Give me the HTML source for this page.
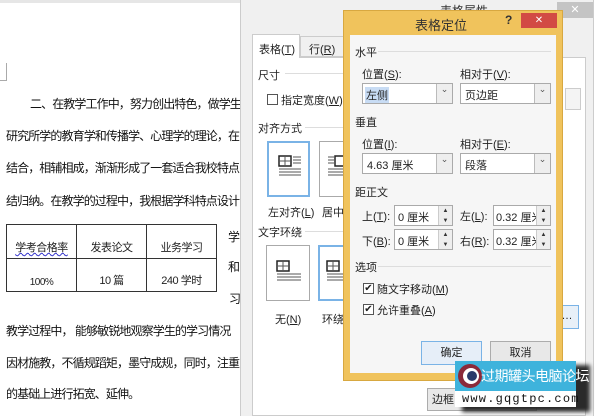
<!DOCTYPE html>
<html><head><meta charset="utf-8"><style>
*{margin:0;padding:0;box-sizing:border-box}
body{width:600px;height:416px;overflow:hidden;background:#fff;position:relative;font-family:"Liberation Sans","Noto Sans CJK SC",sans-serif;font-size:11px;color:#222}
.a{position:absolute;white-space:nowrap}
.doc{font-size:12px;letter-spacing:-0.9px;color:#111}
.box{position:absolute;border:1px solid #aaa;background:#fff}
.cb{position:absolute;width:11px;height:11px;border:1px solid #555;background:#fff;font-size:10px;line-height:9px;text-align:center}
.dd{position:absolute;right:0;top:0;bottom:0;width:16px;border-left:1px solid #bbb;background:#eee;color:#555;font-size:9px;text-align:center}
.line{position:absolute;height:1px;background:#ddd}
.sp{position:absolute;right:0;top:0;bottom:0;width:14px;border-left:1px solid #ccc;background:#eee;font-size:6px;line-height:10px;text-align:center;color:#333}
.btn{position:absolute;border:1px solid #acacac;background:#e8e8e8;text-align:center;line-height:22px;font-size:11px}
</style></head><body>
<div class="a" style="left:0;top:0;width:240px;height:3px;background:#e6e6e6"></div>
<div class="a" style="left:0;top:63px;width:7px;height:18px;border-right:1px solid #aaa;border-bottom:1px solid #aaa"></div>
<div class="a doc" style="left:30px;top:95px">二、在教学工作中，努力创出特色，做学生</div>
<div class="a doc" style="left:6px;top:127px">研究所学的教育学和传播学、心理学的理论，在</div>
<div class="a doc" style="left:6px;top:159px">结合，相辅相成，渐渐形成了一套适合我校特点</div>
<div class="a doc" style="left:6px;top:192px">结归纳。在教学的过程中，我根据学科特点设计</div>
<table style="position:absolute;left:6px;top:224px;border-collapse:collapse;font-size:11px;letter-spacing:-0.5px;color:#222">
<tr style="height:34px"><td style="width:70px;border:1px solid #333;text-align:center;vertical-align:bottom;padding-bottom:3px;text-decoration:underline wavy #33c;text-decoration-thickness:1px">学考合格率</td><td style="width:70px;border:1px solid #333;text-align:center;vertical-align:bottom;padding-bottom:3px">发表论文</td><td style="width:70px;border:1px solid #333;text-align:center;vertical-align:bottom;padding-bottom:3px">业务学习</td></tr>
<tr style="height:33px"><td style="border:1px solid #333;text-align:center;vertical-align:bottom;padding-bottom:3px;font-size:10px">100%</td><td style="border:1px solid #333;text-align:center;vertical-align:bottom;padding-bottom:3px">10 篇</td><td style="border:1px solid #333;text-align:center;vertical-align:bottom;padding-bottom:3px">240 学时</td></tr></table>
<div class="a doc" style="left:228px;top:228px">学</div>
<div class="a doc" style="left:228px;top:258px">和</div>
<div class="a doc" style="left:229px;top:290px">习</div>
<div class="a doc" style="left:6px;top:322px">教学过程中， 能够敏锐地观察学生的学习情况</div>
<div class="a doc" style="left:6px;top:354px">因材施教，不循规蹈矩，墨守成规，同时，注重</div>
<div class="a doc" style="left:6px;top:385px">的基础上进行拓宽、延伸。</div>

<!-- back dialog -->
<div class="a" style="left:240px;top:0;width:354px;height:416px;background:#f0f0f0;border-left:1px solid #ccc;border-right:1px solid #ccc"></div>
<div class="a" style="left:440px;top:2px;font-size:12px;color:#333">表格属性</div>
<div class="a" style="left:557px;top:2px;width:36px;height:16px;background:#c4c4c4;color:#fff;text-align:center;line-height:16px;font-size:11px">✕</div>
<div class="a" style="left:252px;top:57px;width:334px;height:359px;background:#fff;border:1px solid #ccc"></div>
<div class="a" style="left:252px;top:34px;width:48px;height:24px;background:#fff;border:1px solid #ccc;border-bottom:none;padding:6px 0 0 6px">表格(<u>T</u>)</div>
<div class="a" style="left:300px;top:36px;width:44px;height:21px;background:#f0f0f0;border:1px solid #ccc;padding:4px 0 0 8px">行(<u>R</u>)</div>
<div class="a" style="left:258px;top:67px">尺寸</div>
<div class="line" style="left:285px;top:73px;width:60px"></div>
<div class="cb" style="left:267px;top:94px"></div>
<div class="a" style="left:281px;top:92px">指定宽度(<u>W</u>):</div>
<div class="box" style="left:565px;top:88px;width:16px;height:22px;background:#f4f4f4;border-color:#ccc"></div>
<div class="a" style="left:258px;top:120px">对齐方式</div>
<div class="line" style="left:305px;top:127px;width:40px"></div>
<div class="box" style="left:267px;top:141px;width:43px;height:56px;border:2px solid #7ab3e6"></div>
<div class="box" style="left:319px;top:141px;width:30px;height:56px"></div>
<svg class="a" style="left:278px;top:155px" width="24" height="24"><rect x="1" y="1" width="12" height="10" fill="none" stroke="#222" stroke-width="1.5"/><path d="M7 1V11M1 6H13M15 2H23M15 5H23M15 8H23M1 14H23M1 17H23M1 20H23" stroke="#555" stroke-width="1"/></svg>
<svg class="a" style="left:328px;top:155px" width="22" height="24"><path d="M0 2H6M0 5H6M0 8H6M0 14H22M0 17H22M0 20H22" stroke="#555"/><rect x="7" y="1" width="12" height="10" fill="none" stroke="#222" stroke-width="1.5"/></svg>
<div class="a" style="left:268px;top:204px">左对齐(<u>L</u>)</div>
<div class="a" style="left:322px;top:204px">居中</div>
<div class="a" style="left:258px;top:224px">文字环绕</div>
<div class="line" style="left:305px;top:231px;width:40px"></div>
<div class="box" style="left:266px;top:245px;width:44px;height:56px"></div>
<div class="box" style="left:318px;top:245px;width:30px;height:56px;border:2px solid #7ab3e6"></div>
<svg class="a" style="left:276px;top:260px" width="26" height="24"><rect x="1" y="1" width="12" height="10" fill="none" stroke="#222" stroke-width="1.5"/><path d="M7 1V11M1 6H13M1 14H25M1 17H25M1 20H25" stroke="#555"/></svg>
<svg class="a" style="left:326px;top:260px" width="22" height="24"><rect x="1" y="1" width="12" height="10" fill="none" stroke="#222" stroke-width="1.5"/><path d="M7 1V11M1 6H13M1 14H22M1 17H22M1 20H22" stroke="#555"/></svg>
<div class="a" style="left:275px;top:311px">无(<u>N</u>)</div>
<div class="a" style="left:322px;top:311px">环绕</div>
<div class="box" style="left:555px;top:305px;width:24px;height:24px;border-color:#7ab3e6;background:#e8f0f8;text-align:center;line-height:20px">…</div>
<div class="btn" style="left:427px;top:388px;width:110px;height:23px;text-align:left;padding-left:4px">边框</div>

<!-- front dialog -->
<div class="a" style="left:343px;top:10px;width:220px;height:371px;background:#f0c35c;border:1px solid #d8a840"></div>
<div class="a" style="left:350px;top:35px;width:206px;height:338px;background:#f6f6f6"></div>
<div class="a" style="left:415px;top:15px;font-size:13px;color:#333">表格定位</div>
<div class="a" style="left:505px;top:13px;font-size:12px;font-weight:bold;color:#333">?</div>
<div class="a" style="left:521px;top:13px;width:36px;height:15px;background:#d24a44;color:#fff;text-align:center;line-height:15px;font-size:10px">✕</div>
<div class="a" style="left:355px;top:44px">水平</div>
<div class="line" style="left:378px;top:51px;width:173px"></div>
<div class="a" style="left:362px;top:66px">位置(<u>S</u>):</div>
<div class="a" style="left:460px;top:66px">相对于(<u>V</u>):</div>
<div class="box" style="left:362px;top:83px;width:91px;height:21px"><span class="a" style="left:2px;top:3px;background:#c8dcf4;padding:0 1px">左侧</span><div class="dd">⌄</div></div>
<div class="box" style="left:460px;top:83px;width:91px;height:21px"><span class="a" style="left:4px;top:3px">页边距</span><div class="dd">⌄</div></div>
<div class="a" style="left:355px;top:114px">垂直</div>
<div class="a" style="left:362px;top:136px">位置(<u>I</u>):</div>
<div class="a" style="left:460px;top:136px">相对于(<u>E</u>):</div>
<div class="box" style="left:362px;top:153px;width:91px;height:21px"><span class="a" style="left:4px;top:3px">4.63 厘米</span><div class="dd">⌄</div></div>
<div class="box" style="left:460px;top:153px;width:91px;height:21px"><span class="a" style="left:4px;top:3px">段落</span><div class="dd">⌄</div></div>
<div class="a" style="left:355px;top:184px">距正文</div>
<div class="a" style="left:362px;top:208px">上(<u>T</u>):</div>
<div class="box" style="left:394px;top:205px;width:59px;height:21px"><span class="a" style="left:3px;top:3px">0 厘米</span><div class="sp">▲<br>▼</div></div>
<div class="a" style="left:460px;top:208px">左(<u>L</u>):</div>
<div class="box" style="left:493px;top:205px;width:58px;height:21px"><span class="a" style="left:2px;top:3px">0.32 厘米</span><div class="sp">▲<br>▼</div></div>
<div class="a" style="left:362px;top:233px">下(<u>B</u>):</div>
<div class="box" style="left:394px;top:229px;width:59px;height:21px"><span class="a" style="left:3px;top:3px">0 厘米</span><div class="sp">▲<br>▼</div></div>
<div class="a" style="left:460px;top:233px">右(<u>R</u>):</div>
<div class="box" style="left:493px;top:229px;width:58px;height:21px"><span class="a" style="left:2px;top:3px">0.32 厘米</span><div class="sp">▲<br>▼</div></div>
<div class="a" style="left:355px;top:259px">选项</div>
<div class="line" style="left:378px;top:266px;width:173px"></div>
<div class="cb" style="left:363px;top:283px">✔</div>
<div class="a" style="left:377px;top:281px">随文字移动(<u>M</u>)</div>
<div class="cb" style="left:363px;top:304px">✔</div>
<div class="a" style="left:377px;top:302px">允许重叠(<u>A</u>)</div>
<div class="btn" style="left:421px;top:341px;width:61px;height:24px;border-color:#7ab3e6;background:#e6eef8">确定</div>
<div class="btn" style="left:490px;top:341px;width:61px;height:24px">取消</div>

<!-- watermark -->
<div class="a" style="left:462px;top:365px;width:128px;height:47px;background:#2a2a2a;filter:blur(2px)"></div>
<div class="a" style="left:455px;top:361px;width:121px;height:30px;background:#3eb3dc"></div>
<div class="a" style="left:455px;top:391px;width:121px;height:16px;background:#fff"></div>
<svg class="a" style="left:457px;top:363px" width="26" height="26"><circle cx="13" cy="13" r="12" fill="#8b2a3a"/><circle cx="14" cy="13" r="8" fill="#fff"/><circle cx="15" cy="13" r="5" fill="#2a3a6a"/></svg>
<div class="a" style="left:481px;top:366px;color:#fff;font-size:14px;letter-spacing:-0.5px">过期罐头电脑论坛</div>
<div class="a" style="left:462px;top:392px;color:#111;font-size:12px;letter-spacing:1.2px;font-family:'Liberation Mono',monospace">www.gqgtpc.com</div>
</body></html>
